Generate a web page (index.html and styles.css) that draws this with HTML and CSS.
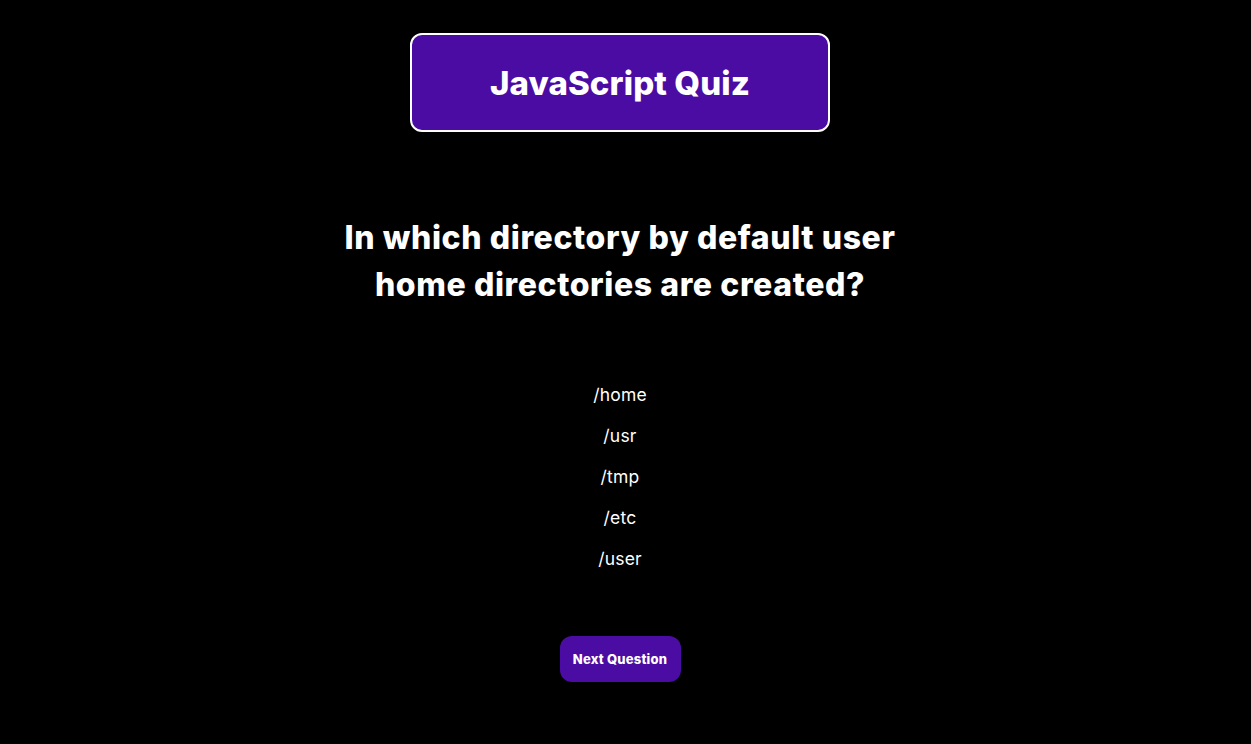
FILE: index.html
```html
<!DOCTYPE html>
<html lang="en">
<head>
<meta charset="utf-8">
<title>JavaScript Quiz</title>
<link rel="stylesheet" href="styles.css">
</head>
<body>
<main class="app">
  <header class="title-box">
    <h1 class="title">JavaScript Quiz</h1>
  </header>
  <section class="quiz">
    <h2 class="question">In which directory by default user home directories are created?</h2>
    <ul class="options">
      <li class="option">/home</li>
      <li class="option">/usr</li>
      <li class="option">/tmp</li>
      <li class="option">/etc</li>
      <li class="option">/user</li>
    </ul>
    <button class="next-btn" type="button">Next Question</button>
  </section>
</main>
</body>
</html>
```
FILE: styles.css
```css
* { box-sizing: border-box; }
html, body {
  margin: 0;
  padding: 0;
  background: #000;
  color: #fff;
  font-family: "Inter", "Open Sans", sans-serif;
}
.app {
  display: flex;
  flex-direction: column;
  align-items: center;
  padding-top: 33px;
  padding-right: 11px;
}
.title-box {
  width: 420px;
  height: 99px;
  background: #4a0ca3;
  border: 2px solid #fff;
  border-radius: 12px;
  display: flex;
  align-items: center;
  justify-content: center;
}
.title {
  margin: 0;
  font-size: 33px;
  font-weight: 800;
  letter-spacing: 0.1px;
}
.quiz {
  display: flex;
  flex-direction: column;
  align-items: center;
}
.question {
  margin: 82px 0 0;
  width: 600px;
  text-align: center;
  font-size: 32px;
  font-weight: 800;
  line-height: 47px;
  letter-spacing: 0.6px;
}
.options {
  list-style: none;
  margin: 75px 0 0;
  padding: 0;
  display: flex;
  flex-direction: column;
  align-items: center;
  gap: 17px;
}
.option {
  font-size: 17.5px;
  line-height: 24px;
  letter-spacing: 0.2px;
}
.next-btn {
  margin-top: 65px;
  width: 121px;
  height: 46px;
  border: none;
  border-radius: 12px;
  background: #4a0ca3;
  color: #fff;
  font-family: inherit;
  font-size: 13px;
  font-weight: 800;
  letter-spacing: 0.2px;
  padding: 0;
}
```
